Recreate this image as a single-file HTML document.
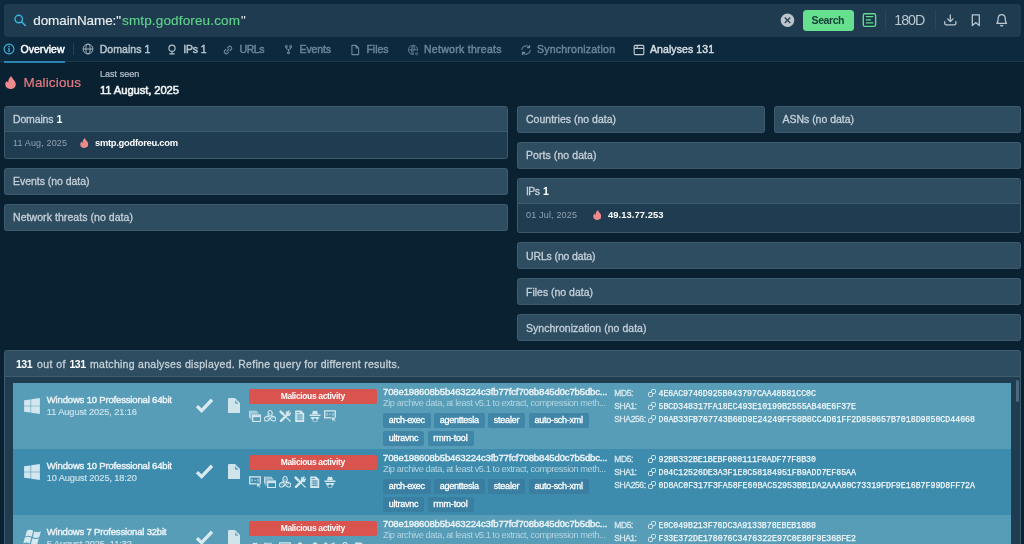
<!DOCTYPE html>
<html lang="en"><head><meta charset="utf-8"><title>Threat Intelligence Lookup</title>
<style>
html,body{margin:0;padding:0}
body{width:1024px;height:544px;overflow:hidden;background:#0a2132;position:relative;font-family:"Liberation Sans", sans-serif;}
#app{position:absolute;left:0;top:0;width:1024px;height:544px;overflow:hidden;will-change:transform}
#app div,#app svg,#app span{position:absolute;box-sizing:border-box}
.t{white-space:pre;font-family:"Liberation Sans", sans-serif}
.m{font-family:"Liberation Mono", monospace}
</style></head><body><div id="app">
<div style="left:0px;top:0px;width:1024px;height:62px;background:#0d293d;"></div>
<div style="left:0px;top:61px;width:1024px;height:1px;background:#1a384d;"></div>
<div style="left:4px;top:4px;width:1017px;height:33px;background:#1f3b50;border-radius:4px;"></div>
<div style="left:803.25px;top:9.6px;width:50.5px;height:21.3px;background:#66df8f;border-radius:3.5px;"></div>
<div style="left:885.2px;top:10.25px;width:1.0px;height:19.35px;background:#2b475b;"></div>
<div style="left:934.6px;top:10.25px;width:1.0px;height:19.35px;background:#2b475b;"></div>
<div style="left:4px;top:61px;width:61px;height:2px;background:#2a86ae;"></div>
<div style="left:73px;top:43px;width:1px;height:12px;background:#24445a;"></div>
<div style="left:4px;top:106px;width:504px;height:53px;background:#203c50;border-radius:2.5px;border:1px solid #3f5c6f;"></div>
<div style="left:5px;top:107px;width:502px;height:24.5px;background:#2f4d61;border-radius:2px 2px 0 0;"></div>
<div style="left:5px;top:131.2px;width:502px;height:1.0px;background:#3f5c6f;"></div>
<div style="left:4px;top:168px;width:504px;height:26.5px;background:#2f4d61;border-radius:2.5px;border:1px solid #3f5c6f;"></div>
<div style="left:4px;top:204.2px;width:504px;height:26.5px;background:#2f4d61;border-radius:2.5px;border:1px solid #3f5c6f;"></div>
<div style="left:517px;top:106px;width:247.5px;height:26.5px;background:#2f4d61;border-radius:2.5px;border:1px solid #3f5c6f;"></div>
<div style="left:773.5px;top:106px;width:247.5px;height:26.5px;background:#2f4d61;border-radius:2.5px;border:1px solid #3f5c6f;"></div>
<div style="left:517px;top:142px;width:504px;height:26.5px;background:#2f4d61;border-radius:2.5px;border:1px solid #3f5c6f;"></div>
<div style="left:517px;top:178px;width:504px;height:55px;background:#203c50;border-radius:2.5px;border:1px solid #3f5c6f;"></div>
<div style="left:518px;top:179px;width:502px;height:24.5px;background:#2f4d61;border-radius:2px 2px 0 0;"></div>
<div style="left:518px;top:203.2px;width:502px;height:1.0px;background:#3f5c6f;"></div>
<div style="left:517px;top:242.4px;width:504px;height:26.5px;background:#2f4d61;border-radius:2.5px;border:1px solid #3f5c6f;"></div>
<div style="left:517px;top:278.4px;width:504px;height:26.5px;background:#2f4d61;border-radius:2.5px;border:1px solid #3f5c6f;"></div>
<div style="left:517px;top:314.4px;width:504px;height:26.5px;background:#2f4d61;border-radius:2.5px;border:1px solid #3f5c6f;"></div>
<div style="left:4px;top:350px;width:1017px;height:210px;background:#1f3c51;border-radius:2.5px;border:1px solid #3f5c6f;"></div>
<div style="left:5px;top:351px;width:1015px;height:25.5px;background:#2f4d61;border-radius:2px 2px 0 0;"></div>
<div style="left:5px;top:376.3px;width:1015px;height:1.0px;background:#3f5c6f;"></div>
<div style="left:1015.7px;top:380px;width:3.3px;height:22px;background:#4d6b80;border-radius:1.6px;"></div>
<div style="left:13.25px;top:382.75px;width:997.75px;height:66.2px;background:#579db7;"></div>
<div style="left:249.25px;top:388.75px;width:127.75px;height:15.0px;background:#d9534f;border-radius:2px;"></div>
<div style="left:383px;top:412.75px;width:47.75px;height:14.9px;background:#3f86a9;border-radius:2px;"></div>
<div style="left:434px;top:412.75px;width:50.75px;height:14.9px;background:#3f86a9;border-radius:2px;"></div>
<div style="left:488px;top:412.75px;width:37.25px;height:14.9px;background:#3f86a9;border-radius:2px;"></div>
<div style="left:528.75px;top:412.75px;width:60.0px;height:14.9px;background:#3f86a9;border-radius:2px;"></div>
<div style="left:383px;top:430.95px;width:41.25px;height:14.9px;background:#3f86a9;border-radius:2px;"></div>
<div style="left:427.5px;top:430.95px;width:46.0px;height:14.9px;background:#3f86a9;border-radius:2px;"></div>
<div style="left:13.25px;top:448.65px;width:997.75px;height:66.2px;background:#3e8cad;"></div>
<div style="left:249.25px;top:454.65px;width:127.75px;height:15.0px;background:#d9534f;border-radius:2px;"></div>
<div style="left:383px;top:478.65px;width:47.75px;height:14.9px;background:#3a7ea1;border-radius:2px;"></div>
<div style="left:434px;top:478.65px;width:50.75px;height:14.9px;background:#3a7ea1;border-radius:2px;"></div>
<div style="left:488px;top:478.65px;width:37.25px;height:14.9px;background:#3a7ea1;border-radius:2px;"></div>
<div style="left:528.75px;top:478.65px;width:60.0px;height:14.9px;background:#3a7ea1;border-radius:2px;"></div>
<div style="left:383px;top:496.84999999999997px;width:41.25px;height:14.9px;background:#3a7ea1;border-radius:2px;"></div>
<div style="left:427.5px;top:496.84999999999997px;width:46.0px;height:14.9px;background:#3a7ea1;border-radius:2px;"></div>
<div style="left:13.25px;top:514.55px;width:997.75px;height:66.2px;background:#579db7;"></div>
<div style="left:249.25px;top:520.55px;width:127.75px;height:15.0px;background:#d9534f;border-radius:2px;"></div>
<div style="left:383px;top:544.55px;width:47.75px;height:14.9px;background:#3f86a9;border-radius:2px;"></div>
<div style="left:434px;top:544.55px;width:50.75px;height:14.9px;background:#3f86a9;border-radius:2px;"></div>
<div style="left:488px;top:544.55px;width:37.25px;height:14.9px;background:#3f86a9;border-radius:2px;"></div>
<div style="left:528.75px;top:544.55px;width:60.0px;height:14.9px;background:#3f86a9;border-radius:2px;"></div>
<div style="left:383px;top:562.75px;width:41.25px;height:14.9px;background:#3f86a9;border-radius:2px;"></div>
<div style="left:427.5px;top:562.75px;width:46.0px;height:14.9px;background:#3f86a9;border-radius:2px;"></div>
<svg style="left:12px;top:12px;" width="16" height="16" viewBox="0 0 16 16"><circle cx="6.75" cy="7.05" r="3.75" fill="none" stroke="#3db4e0" stroke-width="1.4"/><path d="M9.7 10 L13.3 13.5" stroke="#3db4e0" stroke-width="1.5" stroke-linecap="round"/></svg>
<svg style="left:780px;top:13px;" width="15" height="15" viewBox="0 0 15 15"><circle cx="7.5" cy="7.25" r="6.75" fill="#bcc5cc"/><path d="M4.75 4.5 L10.25 10 M10.25 4.5 L4.75 10" stroke="#1f3b50" stroke-width="1.15" stroke-linecap="butt"/></svg>
<svg style="left:861px;top:12px;" width="17" height="17" viewBox="0 0 17 17"><rect x="2.3" y="1.8" width="12.3" height="12.6" rx="1.6" fill="#1a3548" stroke="#62dc8e" stroke-width="1.4"/><path d="M5.3 4.6 H11.9 M5.3 7.8 H9.6 M5.3 10.9 H11.9" stroke="#62dc8e" stroke-width="1.3" stroke-linecap="round"/></svg>
<svg style="left:940px;top:10px;" width="72" height="20" viewBox="940 10 72 20"><g fill="none" stroke="#bcc8d1" stroke-width="1.25" stroke-linecap="round" stroke-linejoin="round"><path d="M950.3 14.9 V21.4 M947.6 18.9 L950.3 21.6 L953 18.9 M944.7 21.6 V23.6 Q944.7 24.8 945.9 24.8 H954.7 Q955.9 24.8 955.9 23.6 V21.6"/><path d="M972.3 14.8 H979.3 V25.5 L975.8 22.6 L972.3 25.5 Z"/><path d="M996.9 23.4 C998.2 22.2 998.1 20.6 998.1 19 C998.1 16 999.7 14.5 1001.7 14.5 C1003.7 14.5 1005.3 16 1005.3 19 C1005.3 20.6 1005.2 22.2 1006.5 23.4 Z M1000.7 25.5 Q1001.7 26.3 1002.7 25.5"/></g></svg>
<svg style="left:3px;top:43.3px;" width="12" height="12" viewBox="0 0 12 12"><circle cx="6" cy="6" r="4.9" fill="none" stroke="#3db4e0" stroke-width="1.1"/><path d="M6 5.4 V8.4" stroke="#3db4e0" stroke-width="1.3" stroke-linecap="round"/><circle cx="6" cy="3.6" r="0.8" fill="#3db4e0"/></svg>
<svg style="left:82.2px;top:43.4px;" width="12" height="12" viewBox="0 0 12 12"><g fill="none" stroke="#a9b8c2" stroke-width="0.95"><circle cx="6" cy="6" r="4.9"/><ellipse cx="6" cy="6" rx="2.1" ry="4.9"/><path d="M1.1 6 H10.9"/></g></svg>
<svg style="left:165.7px;top:42.7px;" width="12" height="12" viewBox="0 0 12 12"><g fill="none" stroke="#b6c4cd" stroke-width="1.1" stroke-linecap="round"><circle cx="6" cy="5.2" r="3.1"/><path d="M6 8.3 V10.8 M3.8 10.9 H8.2"/></g></svg>
<svg style="left:222px;top:43.5px;" width="12" height="12" viewBox="0 0 12 12"><g fill="none" stroke="#6f8797" stroke-width="1.1" stroke-linecap="round" transform="rotate(-45 6 6)"><path d="M5 7.9 H3.4 A1.9 1.9 0 0 1 3.4 4.1 H5"/><path d="M7 4.1 H8.6 A1.9 1.9 0 0 1 8.6 7.9 H7"/><path d="M4.4 6 H7.6"/></g></svg>
<svg style="left:282.6px;top:44px;" width="11" height="11" viewBox="0 0 12 12"><g fill="none" stroke="#6f8797" stroke-width="1.1" stroke-linecap="round"><circle cx="3.6" cy="2.8" r="1.1"/><circle cx="8.4" cy="2.8" r="1.1"/><circle cx="6" cy="9.6" r="1.1"/><path d="M3.6 3.9 V4.6 Q3.6 6 6 6 Q8.4 6 8.4 4.6 V3.9 M6 6 V8.5"/></g></svg>
<svg style="left:349px;top:43.5px;" width="12" height="12" viewBox="0 0 12 12"><path d="M2.9 1.4 H7 L9.6 4 V10.6 H2.9 Z M7 1.4 V4 H9.6" fill="none" stroke="#6f8797" stroke-width="1.1" stroke-linejoin="round"/></svg>
<svg style="left:407.3px;top:43.6px;" width="12" height="12" viewBox="0 0 12 12"><g fill="none" stroke="#67829a" stroke-width="0.85"><path d="M10.5 6.6 A4.6 4.6 0 1 0 6.6 10.4"/><path d="M6 1.3 C3.9 3.2 3.9 8.6 6 10.5 M6 1.3 C7.3 2.5 7.9 4.2 7.9 6 M1.4 5.9 H10.5 M6 1.3 V10.5"/><circle cx="9.7" cy="9.7" r="1.1"/></g></svg>
<svg style="left:520px;top:43.5px;" width="12" height="12" viewBox="0 0 12 12"><g fill="none" stroke="#6f8797" stroke-width="1.1" stroke-linecap="round" stroke-linejoin="round"><path d="M1.8 5.4 A4.3 4.3 0 0 1 9.4 3.4 M10.2 6.6 A4.3 4.3 0 0 1 2.6 8.6"/><path d="M9.6 1.4 V3.6 H7.4 M2.4 10.6 V8.4 H4.6"/></g></svg>
<svg style="left:632.5px;top:43.5px;" width="12" height="12" viewBox="0 0 12 12"><g fill="none" stroke="#c0cbd3" stroke-width="1.1" stroke-linejoin="round"><rect x="1.2" y="1.4" width="9.6" height="9.2" rx="1"/><path d="M1.2 4.4 H10.8 M4.2 1.4 V4.4"/></g></svg>
<svg style="left:5px;top:76px;" width="11" height="13" viewBox="0 0 11 13"><path d="M6.5 0 C6.5 2.5 10.8 4.5 10.8 8.2 C10.8 11 8.4 13 5.5 13 C2.6 13 0.3 11 0.3 8.3 C0.3 6.8 1 5.6 2 5 C2.2 5.8 2.6 6.3 3.3 6.4 C3 4 4.2 1.6 6.5 0 Z" fill="#ef8a8c"/></svg>
<svg style="left:79.8px;top:137.6px;" width="8.5" height="10" viewBox="0 0 11 13"><path d="M6.5 0 C6.5 2.5 10.8 4.5 10.8 8.2 C10.8 11 8.4 13 5.5 13 C2.6 13 0.3 11 0.3 8.3 C0.3 6.8 1 5.6 2 5 C2.2 5.8 2.6 6.3 3.3 6.4 C3 4 4.2 1.6 6.5 0 Z" fill="#ef8a8c"/></svg>
<svg style="left:592.8px;top:209.6px;" width="8.5" height="10" viewBox="0 0 11 13"><path d="M6.5 0 C6.5 2.5 10.8 4.5 10.8 8.2 C10.8 11 8.4 13 5.5 13 C2.6 13 0.3 11 0.3 8.3 C0.3 6.8 1 5.6 2 5 C2.2 5.8 2.6 6.3 3.3 6.4 C3 4 4.2 1.6 6.5 0 Z" fill="#ef8a8c"/></svg>
<svg style="left:23.5px;top:397.85px;" width="16" height="16" viewBox="0 0 16 16.2"><path d="M0 2.3 L6.6 1.4 V7.75 H0 Z M7.15 1.3 L16 0 V7.75 H7.15 Z M0 8.35 H6.6 V14.7 L0 13.8 Z M7.15 8.35 H16 V16.2 L7.15 14.9 Z" fill="#d3e6ee"/></svg>
<svg style="left:194px;top:394.75px;" width="22" height="20" viewBox="194 12 22 20"><path d="M197.0 23.05 L201.6 27.72 L212.0 16.75" fill="none" stroke="#d8e9f0" stroke-width="3.3" stroke-linejoin="miter" stroke-miterlimit="6"/></svg>
<svg style="left:228.1px;top:398.1px;" width="12.2" height="15.4" viewBox="0 0 12.2 15.4"><path d="M0 1.2 Q0 0 1.2 0 H7 L12.2 5.2 V14.2 Q12.2 15.4 11 15.4 H1.2 Q0 15.4 0 14.2 Z" fill="#d0e4ec"/><path d="M7 2.1 V5.7 H10.7 Z" fill="#579db7" opacity="0.75"/></svg>
<svg style="left:249px;top:409.75px;" width="12.4" height="12.4" viewBox="0 0 12.4 12.4"><g fill="none" stroke="#d6e8ef"><path d="M1.9 9.4 V2.9 H9.4 M0.5 7.6 V1.2 H8" stroke-width="1.1" opacity="0.85"/><rect x="3.7" y="5" width="8" height="6.6" stroke-width="1.25"/><path d="M3.7 6.2 H11.7" stroke-width="1.9"/></g></svg>
<svg style="left:264px;top:409.75px;" width="12.4" height="12.4" viewBox="0 0 12.4 12.4"><g fill="none" stroke="#d6e8ef" stroke-width="1.15" stroke-linecap="round"><path d="M4.9 5.6 C3.4 4.2 3.7 1.5 5.5 0.5 M7.3 5.6 C8.8 4.2 8.5 1.5 6.7 0.5"/><g transform="rotate(120 6.1 6.9)"><path d="M4.9 5.6 C3.4 4.2 3.7 1.5 5.5 0.5 M7.3 5.6 C8.8 4.2 8.5 1.5 6.7 0.5"/></g><g transform="rotate(240 6.1 6.9)"><path d="M4.9 5.6 C3.4 4.2 3.7 1.5 5.5 0.5 M7.3 5.6 C8.8 4.2 8.5 1.5 6.7 0.5"/></g><circle cx="6.1" cy="6.9" r="1.3" stroke-width="0.9"/><circle cx="6.1" cy="6.9" r="3.1" stroke-width="0.7" stroke-dasharray="3.2 3.3" stroke-dashoffset="1.6"/></g></svg>
<svg style="left:279px;top:409.75px;" width="12.4" height="12.4" viewBox="0 0 12.4 12.4"><g stroke="#d6e8ef" stroke-linecap="round" fill="none"><path d="M1.6 1.6 L4.4 4.4" stroke-width="2.5"/><path d="M4.4 4.4 L11.2 11.2" stroke-width="1.2"/><path d="M2 10.9 L8.2 4.7" stroke-width="2.4"/><path d="M8 1.6 A2.7 2.7 0 0 0 7.9 5 A2.7 2.7 0 0 0 11.3 4.9 L9.6 4.4 L8.7 3.4 L8 1.6 Z" fill="#d6e8ef" stroke-width="0.9" stroke-linejoin="round"/><path d="M10.2 0.9 L8.9 2.6 L10.2 3.9 L12 2.7" stroke-width="1.3" stroke-linejoin="round"/></g></svg>
<svg style="left:294px;top:409.75px;" width="12.4" height="12.4" viewBox="0 0 12.4 12.4"><g><path d="M1.2 0.5 H7.2 L10.2 3.5 V12 H1.2 Z" fill="#d6e8ef"/><path d="M2.6 2.6 H5.8 M2.6 5 H8.8 M2.6 7.1 H8.8 M2.6 9.3 H8.8" stroke="#579db7" stroke-width="0.9"/><path d="M4.7 4.2 V10.4 M6.9 4.2 V10.4" stroke="#579db7" stroke-width="0.6"/></g></svg>
<svg style="left:309px;top:409.75px;" width="12.4" height="12.4" viewBox="0 0 12.4 12.4"><g fill="#d6e8ef"><path d="M3 4.2 L3.9 1.1 Q4.1 0.4 4.8 0.7 L6 1.2 L7.2 0.7 Q7.9 0.4 8.1 1.1 L9 4.2 Z"/><rect x="0.3" y="4.6" width="11.4" height="1.4" rx="0.7"/><path d="M1.7 7.1 H10.3 V7.9 H9.8 Q9.6 9.7 8.2 9.7 Q7 9.7 6.6 8.3 H5.4 Q5 9.7 3.8 9.7 Q2.4 9.7 2.2 7.9 H1.7 Z"/><path d="M3.2 10.1 L6 11.4 L8.8 10.1 L8 11.7 H4 Z" opacity="0.9"/></g></svg>
<svg style="left:324px;top:409.75px;" width="12.4" height="12.4" viewBox="0 0 12.4 12.4"><g><rect x="0.7" y="0.9" width="10.6" height="6.9" fill="none" stroke="#d6e8ef" stroke-width="1.3"/><path d="M3 2.9 V5.8 M9 2.9 V5.8 M5.2 4.35 H6.8" stroke="#d6e8ef" stroke-width="0.9"/><path d="M7.2 6.6 L12.2 8.2 L10.5 9.3 L11.9 11.1 L10.8 11.9 L9.5 10.1 L8.2 11.4 Z" fill="#d6e8ef" stroke="#579db7" stroke-width="0.6"/></g></svg>
<svg style="left:647px;top:389px;" width="10" height="10" viewBox="0 0 10 10"><g fill="none" stroke="#dcebf2" stroke-width="1"><rect x="1.5" y="3.5" width="4" height="4" rx="0.9"/><path d="M4.5 3 V1.5 Q4.5 0.5 5.5 0.5 H7.5 Q8.5 0.5 8.5 1.5 V3.5 Q8.5 4.5 7.5 4.5 H6"/></g></svg>
<svg style="left:647px;top:402px;" width="10" height="10" viewBox="0 0 10 10"><g fill="none" stroke="#dcebf2" stroke-width="1"><rect x="1.5" y="3.5" width="4" height="4" rx="0.9"/><path d="M4.5 3 V1.5 Q4.5 0.5 5.5 0.5 H7.5 Q8.5 0.5 8.5 1.5 V3.5 Q8.5 4.5 7.5 4.5 H6"/></g></svg>
<svg style="left:647px;top:415px;" width="10" height="10" viewBox="0 0 10 10"><g fill="none" stroke="#dcebf2" stroke-width="1"><rect x="1.5" y="3.5" width="4" height="4" rx="0.9"/><path d="M4.5 3 V1.5 Q4.5 0.5 5.5 0.5 H7.5 Q8.5 0.5 8.5 1.5 V3.5 Q8.5 4.5 7.5 4.5 H6"/></g></svg>
<svg style="left:23.5px;top:463.75px;" width="16" height="16" viewBox="0 0 16 16.2"><path d="M0 2.3 L6.6 1.4 V7.75 H0 Z M7.15 1.3 L16 0 V7.75 H7.15 Z M0 8.35 H6.6 V14.7 L0 13.8 Z M7.15 8.35 H16 V16.2 L7.15 14.9 Z" fill="#d3e6ee"/></svg>
<svg style="left:194px;top:460.65px;" width="22" height="20" viewBox="194 12 22 20"><path d="M197.0 23.05 L201.6 27.72 L212.0 16.75" fill="none" stroke="#d8e9f0" stroke-width="3.3" stroke-linejoin="miter" stroke-miterlimit="6"/></svg>
<svg style="left:228.1px;top:464.0px;" width="12.2" height="15.4" viewBox="0 0 12.2 15.4"><path d="M0 1.2 Q0 0 1.2 0 H7 L12.2 5.2 V14.2 Q12.2 15.4 11 15.4 H1.2 Q0 15.4 0 14.2 Z" fill="#d0e4ec"/><path d="M7 2.1 V5.7 H10.7 Z" fill="#3e8cad" opacity="0.75"/></svg>
<svg style="left:249px;top:475.65px;" width="12.4" height="12.4" viewBox="0 0 12.4 12.4"><g><rect x="0.7" y="0.9" width="10.6" height="6.9" fill="none" stroke="#d6e8ef" stroke-width="1.3"/><path d="M3 2.9 V5.8 M9 2.9 V5.8 M5.2 4.35 H6.8" stroke="#d6e8ef" stroke-width="0.9"/><path d="M7.2 6.6 L12.2 8.2 L10.5 9.3 L11.9 11.1 L10.8 11.9 L9.5 10.1 L8.2 11.4 Z" fill="#d6e8ef" stroke="#3e8cad" stroke-width="0.6"/></g></svg>
<svg style="left:264px;top:475.65px;" width="12.4" height="12.4" viewBox="0 0 12.4 12.4"><g fill="none" stroke="#d6e8ef"><path d="M1.9 9.4 V2.9 H9.4 M0.5 7.6 V1.2 H8" stroke-width="1.1" opacity="0.85"/><rect x="3.7" y="5" width="8" height="6.6" stroke-width="1.25"/><path d="M3.7 6.2 H11.7" stroke-width="1.9"/></g></svg>
<svg style="left:279px;top:475.65px;" width="12.4" height="12.4" viewBox="0 0 12.4 12.4"><g fill="none" stroke="#d6e8ef" stroke-width="1.15" stroke-linecap="round"><path d="M4.9 5.6 C3.4 4.2 3.7 1.5 5.5 0.5 M7.3 5.6 C8.8 4.2 8.5 1.5 6.7 0.5"/><g transform="rotate(120 6.1 6.9)"><path d="M4.9 5.6 C3.4 4.2 3.7 1.5 5.5 0.5 M7.3 5.6 C8.8 4.2 8.5 1.5 6.7 0.5"/></g><g transform="rotate(240 6.1 6.9)"><path d="M4.9 5.6 C3.4 4.2 3.7 1.5 5.5 0.5 M7.3 5.6 C8.8 4.2 8.5 1.5 6.7 0.5"/></g><circle cx="6.1" cy="6.9" r="1.3" stroke-width="0.9"/><circle cx="6.1" cy="6.9" r="3.1" stroke-width="0.7" stroke-dasharray="3.2 3.3" stroke-dashoffset="1.6"/></g></svg>
<svg style="left:294px;top:475.65px;" width="12.4" height="12.4" viewBox="0 0 12.4 12.4"><g stroke="#d6e8ef" stroke-linecap="round" fill="none"><path d="M1.6 1.6 L4.4 4.4" stroke-width="2.5"/><path d="M4.4 4.4 L11.2 11.2" stroke-width="1.2"/><path d="M2 10.9 L8.2 4.7" stroke-width="2.4"/><path d="M8 1.6 A2.7 2.7 0 0 0 7.9 5 A2.7 2.7 0 0 0 11.3 4.9 L9.6 4.4 L8.7 3.4 L8 1.6 Z" fill="#d6e8ef" stroke-width="0.9" stroke-linejoin="round"/><path d="M10.2 0.9 L8.9 2.6 L10.2 3.9 L12 2.7" stroke-width="1.3" stroke-linejoin="round"/></g></svg>
<svg style="left:309px;top:475.65px;" width="12.4" height="12.4" viewBox="0 0 12.4 12.4"><g><path d="M1.2 0.5 H7.2 L10.2 3.5 V12 H1.2 Z" fill="#d6e8ef"/><path d="M2.6 2.6 H5.8 M2.6 5 H8.8 M2.6 7.1 H8.8 M2.6 9.3 H8.8" stroke="#3e8cad" stroke-width="0.9"/><path d="M4.7 4.2 V10.4 M6.9 4.2 V10.4" stroke="#3e8cad" stroke-width="0.6"/></g></svg>
<svg style="left:324px;top:475.65px;" width="12.4" height="12.4" viewBox="0 0 12.4 12.4"><g fill="#d6e8ef"><path d="M3 4.2 L3.9 1.1 Q4.1 0.4 4.8 0.7 L6 1.2 L7.2 0.7 Q7.9 0.4 8.1 1.1 L9 4.2 Z"/><rect x="0.3" y="4.6" width="11.4" height="1.4" rx="0.7"/><path d="M1.7 7.1 H10.3 V7.9 H9.8 Q9.6 9.7 8.2 9.7 Q7 9.7 6.6 8.3 H5.4 Q5 9.7 3.8 9.7 Q2.4 9.7 2.2 7.9 H1.7 Z"/><path d="M3.2 10.1 L6 11.4 L8.8 10.1 L8 11.7 H4 Z" opacity="0.9"/></g></svg>
<svg style="left:647px;top:455px;" width="10" height="10" viewBox="0 0 10 10"><g fill="none" stroke="#dcebf2" stroke-width="1"><rect x="1.5" y="3.5" width="4" height="4" rx="0.9"/><path d="M4.5 3 V1.5 Q4.5 0.5 5.5 0.5 H7.5 Q8.5 0.5 8.5 1.5 V3.5 Q8.5 4.5 7.5 4.5 H6"/></g></svg>
<svg style="left:647px;top:468px;" width="10" height="10" viewBox="0 0 10 10"><g fill="none" stroke="#dcebf2" stroke-width="1"><rect x="1.5" y="3.5" width="4" height="4" rx="0.9"/><path d="M4.5 3 V1.5 Q4.5 0.5 5.5 0.5 H7.5 Q8.5 0.5 8.5 1.5 V3.5 Q8.5 4.5 7.5 4.5 H6"/></g></svg>
<svg style="left:647px;top:481px;" width="10" height="10" viewBox="0 0 10 10"><g fill="none" stroke="#dcebf2" stroke-width="1"><rect x="1.5" y="3.5" width="4" height="4" rx="0.9"/><path d="M4.5 3 V1.5 Q4.5 0.5 5.5 0.5 H7.5 Q8.5 0.5 8.5 1.5 V3.5 Q8.5 4.5 7.5 4.5 H6"/></g></svg>
<svg style="left:22.6px;top:528.3499999999999px;" width="18.4" height="18" viewBox="-0.5 0 15.25 15"><g transform="scale(1.0515 1)"><path d="M2.6 2.2 C4.4 1.2 6 1.3 7.6 2.4 L6.3 7.2 C4.7 6.2 3 6.1 1.3 7 Z M8.5 2.9 C10.2 3.8 11.9 3.8 13.7 2.7 L12.4 7.5 C10.6 8.5 8.9 8.5 7.2 7.6 Z M1 8 C2.8 7 4.5 7.1 6.1 8.1 L4.8 12.9 C3.2 11.9 1.5 11.8 -0.3 12.8 Z M7 8.6 C8.7 9.5 10.4 9.5 12.1 8.5 L10.8 13.3 C9 14.3 7.3 14.3 5.7 13.4 Z" fill="#d6e8ef"/></g></svg>
<svg style="left:194px;top:526.55px;" width="22" height="20" viewBox="194 12 22 20"><path d="M197.0 23.05 L201.6 27.72 L212.0 16.75" fill="none" stroke="#d8e9f0" stroke-width="3.3" stroke-linejoin="miter" stroke-miterlimit="6"/></svg>
<svg style="left:228.1px;top:529.9px;" width="12.2" height="15.4" viewBox="0 0 12.2 15.4"><path d="M0 1.2 Q0 0 1.2 0 H7 L12.2 5.2 V14.2 Q12.2 15.4 11 15.4 H1.2 Q0 15.4 0 14.2 Z" fill="#d0e4ec"/><path d="M7 2.1 V5.7 H10.7 Z" fill="#579db7" opacity="0.75"/></svg>
<svg style="left:249px;top:541.55px;" width="12.4" height="12.4" viewBox="0 0 12.4 12.4"><g fill="#d6e8ef"><path d="M3 4.2 L3.9 1.1 Q4.1 0.4 4.8 0.7 L6 1.2 L7.2 0.7 Q7.9 0.4 8.1 1.1 L9 4.2 Z"/><rect x="0.3" y="4.6" width="11.4" height="1.4" rx="0.7"/><path d="M1.7 7.1 H10.3 V7.9 H9.8 Q9.6 9.7 8.2 9.7 Q7 9.7 6.6 8.3 H5.4 Q5 9.7 3.8 9.7 Q2.4 9.7 2.2 7.9 H1.7 Z"/><path d="M3.2 10.1 L6 11.4 L8.8 10.1 L8 11.7 H4 Z" opacity="0.9"/></g></svg>
<svg style="left:264px;top:541.55px;" width="12.4" height="12.4" viewBox="0 0 12.4 12.4"><g fill="none" stroke="#d6e8ef"><path d="M1.9 9.4 V2.9 H9.4 M0.5 7.6 V1.2 H8" stroke-width="1.1" opacity="0.85"/><rect x="3.7" y="5" width="8" height="6.6" stroke-width="1.25"/><path d="M3.7 6.2 H11.7" stroke-width="1.9"/></g></svg>
<svg style="left:279px;top:541.55px;" width="12.4" height="12.4" viewBox="0 0 12.4 12.4"><g><rect x="0.7" y="0.9" width="10.6" height="6.9" fill="none" stroke="#d6e8ef" stroke-width="1.3"/><path d="M3 2.9 V5.8 M9 2.9 V5.8 M5.2 4.35 H6.8" stroke="#d6e8ef" stroke-width="0.9"/><path d="M7.2 6.6 L12.2 8.2 L10.5 9.3 L11.9 11.1 L10.8 11.9 L9.5 10.1 L8.2 11.4 Z" fill="#d6e8ef" stroke="#579db7" stroke-width="0.6"/></g></svg>
<svg style="left:294px;top:541.55px;" width="12.4" height="12.4" viewBox="0 0 12.4 12.4"><g fill="#d6e8ef"><circle cx="6" cy="2.6" r="2.3"/><path d="M1.6 11.6 Q1.6 6.4 6 6.4 Q10.4 6.4 10.4 11.6 Z"/></g></svg>
<svg style="left:309px;top:541.55px;" width="12.4" height="12.4" viewBox="0 0 12.4 12.4"><g fill="#d6e8ef"><circle cx="6" cy="2.6" r="2.3"/><path d="M1.6 11.6 Q1.6 6.4 6 6.4 Q10.4 6.4 10.4 11.6 Z"/></g></svg>
<svg style="left:324px;top:541.55px;" width="12.4" height="12.4" viewBox="0 0 12.4 12.4"><g stroke="#d6e8ef" stroke-linecap="round" fill="none"><path d="M1.6 1.6 L4.4 4.4" stroke-width="2.5"/><path d="M4.4 4.4 L11.2 11.2" stroke-width="1.2"/><path d="M2 10.9 L8.2 4.7" stroke-width="2.4"/><path d="M8 1.6 A2.7 2.7 0 0 0 7.9 5 A2.7 2.7 0 0 0 11.3 4.9 L9.6 4.4 L8.7 3.4 L8 1.6 Z" fill="#d6e8ef" stroke-width="0.9" stroke-linejoin="round"/><path d="M10.2 0.9 L8.9 2.6 L10.2 3.9 L12 2.7" stroke-width="1.3" stroke-linejoin="round"/></g></svg>
<svg style="left:339px;top:541.55px;" width="12.4" height="12.4" viewBox="0 0 12.4 12.4"><g fill="none" stroke="#d6e8ef" stroke-width="1.15" stroke-linecap="round"><path d="M4.9 5.6 C3.4 4.2 3.7 1.5 5.5 0.5 M7.3 5.6 C8.8 4.2 8.5 1.5 6.7 0.5"/><g transform="rotate(120 6.1 6.9)"><path d="M4.9 5.6 C3.4 4.2 3.7 1.5 5.5 0.5 M7.3 5.6 C8.8 4.2 8.5 1.5 6.7 0.5"/></g><g transform="rotate(240 6.1 6.9)"><path d="M4.9 5.6 C3.4 4.2 3.7 1.5 5.5 0.5 M7.3 5.6 C8.8 4.2 8.5 1.5 6.7 0.5"/></g><circle cx="6.1" cy="6.9" r="1.3" stroke-width="0.9"/><circle cx="6.1" cy="6.9" r="3.1" stroke-width="0.7" stroke-dasharray="3.2 3.3" stroke-dashoffset="1.6"/></g></svg>
<svg style="left:354px;top:541.55px;" width="12.4" height="12.4" viewBox="0 0 12.4 12.4"><g><path d="M1.2 0.5 H7.2 L10.2 3.5 V12 H1.2 Z" fill="#d6e8ef"/><path d="M2.6 2.6 H5.8 M2.6 5 H8.8 M2.6 7.1 H8.8 M2.6 9.3 H8.8" stroke="#579db7" stroke-width="0.9"/><path d="M4.7 4.2 V10.4 M6.9 4.2 V10.4" stroke="#579db7" stroke-width="0.6"/></g></svg>
<svg style="left:647px;top:521px;" width="10" height="10" viewBox="0 0 10 10"><g fill="none" stroke="#dcebf2" stroke-width="1"><rect x="1.5" y="3.5" width="4" height="4" rx="0.9"/><path d="M4.5 3 V1.5 Q4.5 0.5 5.5 0.5 H7.5 Q8.5 0.5 8.5 1.5 V3.5 Q8.5 4.5 7.5 4.5 H6"/></g></svg>
<svg style="left:647px;top:534px;" width="10" height="10" viewBox="0 0 10 10"><g fill="none" stroke="#dcebf2" stroke-width="1"><rect x="1.5" y="3.5" width="4" height="4" rx="0.9"/><path d="M4.5 3 V1.5 Q4.5 0.5 5.5 0.5 H7.5 Q8.5 0.5 8.5 1.5 V3.5 Q8.5 4.5 7.5 4.5 H6"/></g></svg>
<svg style="left:647px;top:547px;" width="10" height="10" viewBox="0 0 10 10"><g fill="none" stroke="#dcebf2" stroke-width="1"><rect x="1.5" y="3.5" width="4" height="4" rx="0.9"/><path d="M4.5 3 V1.5 Q4.5 0.5 5.5 0.5 H7.5 Q8.5 0.5 8.5 1.5 V3.5 Q8.5 4.5 7.5 4.5 H6"/></g></svg>
<span class="t" style="left:33.3px;top:13px;font-size:13.5px;line-height:15px;color:#e9eef1;letter-spacing:-0.104px;-webkit-text-stroke:0.15px;">domainName:&quot;</span>
<span class="t" style="left:122px;top:13px;font-size:13.5px;line-height:15px;color:#5fd38a;letter-spacing:0.152px;-webkit-text-stroke:0.15px;">smtp.godforeu.com</span>
<span class="t" style="left:241px;top:13px;font-size:13.5px;line-height:15px;color:#e6ecf0;">&quot;</span>
<span class="t" style="left:811.6px;top:14px;font-size:10.5px;line-height:12px;font-weight:700;color:#164139;letter-spacing:-0.426px;">Search</span>
<span class="t" style="left:894.3px;top:12px;font-size:14.25px;line-height:16px;color:#b9c7d0;letter-spacing:-1.059px;">180D</span>
<span class="t" style="left:20.5px;top:43px;font-size:10.5px;line-height:12px;color:#ffffff;letter-spacing:0.033px;-webkit-text-stroke:0.45px;">Overview</span>
<span class="t" style="left:99.75px;top:43px;font-size:10.5px;line-height:12px;color:#b6c4cd;letter-spacing:0.037px;-webkit-text-stroke:0.45px;">Domains 1</span>
<span class="t" style="left:183.25px;top:43px;font-size:10.5px;line-height:12px;color:#b6c4cd;letter-spacing:-0.172px;-webkit-text-stroke:0.45px;">IPs 1</span>
<span class="t" style="left:239.5px;top:43px;font-size:10.5px;line-height:12px;color:#6b8596;letter-spacing:-0.422px;-webkit-text-stroke:0.45px;">URLs</span>
<span class="t" style="left:299.5px;top:43px;font-size:10.5px;line-height:12px;color:#6b8596;letter-spacing:-0.122px;-webkit-text-stroke:0.45px;">Events</span>
<span class="t" style="left:366.5px;top:43px;font-size:10.5px;line-height:12px;color:#6b8596;letter-spacing:-0.043px;-webkit-text-stroke:0.45px;">Files</span>
<span class="t" style="left:424px;top:43px;font-size:10.5px;line-height:12px;color:#6b8596;letter-spacing:0.283px;-webkit-text-stroke:0.45px;">Network threats</span>
<span class="t" style="left:537px;top:43px;font-size:10.5px;line-height:12px;color:#6b8596;letter-spacing:0.234px;-webkit-text-stroke:0.45px;">Synchronization</span>
<span class="t" style="left:650px;top:43px;font-size:10.5px;line-height:12px;color:#d5dde3;letter-spacing:0.087px;-webkit-text-stroke:0.45px;">Analyses 131</span>
<span class="t" style="left:23.5px;top:75px;font-size:13.5px;line-height:15px;color:#e67c81;letter-spacing:0.152px;-webkit-text-stroke:0.2px;">Malicious</span>
<span class="t" style="left:100px;top:69px;font-size:9px;line-height:10px;color:#b4c2cc;letter-spacing:0.034px;-webkit-text-stroke:0.2px;">Last seen</span>
<span class="t" style="left:100px;top:84px;font-size:11.25px;line-height:12px;color:#eef2f4;letter-spacing:-0.107px;-webkit-text-stroke:0.55px;">11 August, 2025</span>
<span class="t" style="left:13px;top:113px;font-size:10.5px;line-height:12px;color:#c5d1d9;letter-spacing:-0.156px;-webkit-text-stroke:0.3px;">Domains</span>
<span class="t" style="left:56.5px;top:113px;font-size:10.5px;line-height:12px;font-weight:700;color:#ffffff;">1</span>
<span class="t" style="left:13px;top:138px;font-size:9px;line-height:10px;color:#8fa3b1;letter-spacing:0.146px;">11 Aug, 2025</span>
<span class="t" style="left:95px;top:137px;font-size:9.4px;line-height:11px;font-weight:700;color:#ffffff;letter-spacing:-0.282px;">smtp.godforeu.com</span>
<span class="t" style="left:13px;top:175px;font-size:10.5px;line-height:12px;color:#c5d1d9;letter-spacing:-0.036px;-webkit-text-stroke:0.3px;">Events (no data)</span>
<span class="t" style="left:13px;top:211px;font-size:10.5px;line-height:12px;color:#c5d1d9;letter-spacing:0.064px;-webkit-text-stroke:0.3px;">Network threats (no data)</span>
<span class="t" style="left:526px;top:113px;font-size:10.5px;line-height:12px;color:#c5d1d9;letter-spacing:0.006px;-webkit-text-stroke:0.3px;">Countries (no data)</span>
<span class="t" style="left:782.5px;top:113px;font-size:10.5px;line-height:12px;color:#c5d1d9;letter-spacing:-0.023px;-webkit-text-stroke:0.3px;">ASNs (no data)</span>
<span class="t" style="left:526px;top:149px;font-size:10.5px;line-height:12px;color:#c5d1d9;letter-spacing:0.075px;-webkit-text-stroke:0.3px;">Ports (no data)</span>
<span class="t" style="left:526px;top:185px;font-size:10.5px;line-height:12px;color:#c5d1d9;letter-spacing:-0.586px;-webkit-text-stroke:0.3px;">IPs</span>
<span class="t" style="left:543px;top:185px;font-size:10.5px;line-height:12px;font-weight:700;color:#ffffff;">1</span>
<span class="t" style="left:526px;top:210px;font-size:9px;line-height:10px;color:#8fa3b1;letter-spacing:0.178px;">01 Jul, 2025</span>
<span class="t" style="left:608px;top:209px;font-size:9.4px;line-height:11px;font-weight:700;color:#ffffff;letter-spacing:0.068px;">49.13.77.253</span>
<span class="t" style="left:526px;top:250px;font-size:10.5px;line-height:12px;color:#c5d1d9;letter-spacing:-0.131px;-webkit-text-stroke:0.3px;">URLs (no data)</span>
<span class="t" style="left:526px;top:286px;font-size:10.5px;line-height:12px;color:#c5d1d9;letter-spacing:-0.009px;-webkit-text-stroke:0.3px;">Files (no data)</span>
<span class="t" style="left:526px;top:322px;font-size:10.5px;line-height:12px;color:#c5d1d9;letter-spacing:0.035px;-webkit-text-stroke:0.3px;">Synchronization (no data)</span>
<span class="t" style="left:16px;top:358px;font-size:10.5px;line-height:12px;font-weight:700;color:#ffffff;letter-spacing:-0.516px;">131</span>
<span class="t" style="left:37px;top:358px;font-size:10.5px;line-height:12px;color:#c5d1d9;letter-spacing:0.444px;-webkit-text-stroke:0.3px;">out of</span>
<span class="t" style="left:69.5px;top:358px;font-size:10.5px;line-height:12px;font-weight:700;color:#ffffff;letter-spacing:-0.516px;">131</span>
<span class="t" style="left:90px;top:358px;font-size:10.5px;line-height:12px;color:#c5d1d9;letter-spacing:0.282px;-webkit-text-stroke:0.3px;">matching analyses displayed. Refine query for different results.</span>
<span class="t" style="left:46.8px;top:394px;font-size:9.5px;line-height:11px;color:#eaf3f7;letter-spacing:-0.168px;-webkit-text-stroke:0.42px;">Windows 10 Professional 64bit</span>
<span class="t" style="left:46.8px;top:407px;font-size:9.25px;line-height:10px;color:#cde3ec;letter-spacing:-0.085px;-webkit-text-stroke:0.15px;">11 August 2025, 21:16</span>
<span class="t" style="left:280.75px;top:391px;font-size:8.5px;line-height:10px;font-weight:700;color:#ffffff;letter-spacing:-0.349px;">Malicious activity</span>
<span class="t" style="left:383px;top:386px;font-size:9.5px;line-height:11px;color:#eaf3f7;letter-spacing:-0.127px;-webkit-text-stroke:0.42px;">708e198608b5b463224c3fb77fcf708b845d0c7b5dbc...</span>
<span class="t" style="left:383px;top:398px;font-size:9.25px;line-height:10px;color:#b3d4e1;letter-spacing:-0.433px;">Zip archive data, at least v5.1 to extract, compression meth...</span>
<span class="t" style="left:388.8px;top:415px;font-size:9px;line-height:10px;color:#ffffff;letter-spacing:-0.421px;-webkit-text-stroke:0.3px;">arch-exec</span>
<span class="t" style="left:439.8px;top:415px;font-size:9px;line-height:10px;color:#ffffff;letter-spacing:-0.266px;-webkit-text-stroke:0.3px;">agenttesla</span>
<span class="t" style="left:493.8px;top:415px;font-size:9px;line-height:10px;color:#ffffff;letter-spacing:-0.228px;-webkit-text-stroke:0.3px;">stealer</span>
<span class="t" style="left:534.55px;top:415px;font-size:9px;line-height:10px;color:#ffffff;letter-spacing:-0.283px;-webkit-text-stroke:0.3px;">auto-sch-xml</span>
<span class="t" style="left:388.8px;top:433px;font-size:9px;line-height:10px;color:#ffffff;letter-spacing:-0.267px;-webkit-text-stroke:0.3px;">ultravnc</span>
<span class="t" style="left:433.3px;top:433px;font-size:9px;line-height:10px;color:#ffffff;letter-spacing:-0.157px;-webkit-text-stroke:0.3px;">rmm-tool</span>
<span class="t" style="left:614.3px;top:388px;font-size:8.5px;line-height:10px;color:#d4e8f0;letter-spacing:-0.404px;-webkit-text-stroke:0.3px;">MD5:</span>
<span class="t m" style="left:658.5px;top:389px;font-size:8.25px;line-height:9px;color:#f0f7fa;letter-spacing:-0.030px;-webkit-text-stroke:0.25px;">4E6AC9746D925B043797CAA48B81CC0C</span>
<span class="t" style="left:614.3px;top:401px;font-size:8.5px;line-height:10px;color:#d4e8f0;letter-spacing:-0.470px;-webkit-text-stroke:0.3px;">SHA1:</span>
<span class="t m" style="left:658.5px;top:402px;font-size:8.25px;line-height:9px;color:#f0f7fa;letter-spacing:-0.014px;-webkit-text-stroke:0.25px;">5BCD348317FA18EC493E10199B2555AB40E6F37E</span>
<span class="t" style="left:614.3px;top:414px;font-size:8.5px;line-height:10px;color:#d4e8f0;letter-spacing:-0.372px;-webkit-text-stroke:0.3px;">SHA256:</span>
<span class="t m" style="left:658.5px;top:415px;font-size:8.25px;line-height:9px;color:#f0f7fa;letter-spacing:-0.006px;-webkit-text-stroke:0.25px;">D0AB33FB767743B68D9E24249FF58B8CC4D61FF2D858657B7018D9850CD44668</span>
<span class="t" style="left:46.8px;top:460px;font-size:9.5px;line-height:11px;color:#eaf3f7;letter-spacing:-0.168px;-webkit-text-stroke:0.42px;">Windows 10 Professional 64bit</span>
<span class="t" style="left:46.8px;top:473px;font-size:9.25px;line-height:10px;color:#cde3ec;letter-spacing:-0.120px;-webkit-text-stroke:0.15px;">10 August 2025, 18:20</span>
<span class="t" style="left:280.75px;top:457px;font-size:8.5px;line-height:10px;font-weight:700;color:#ffffff;letter-spacing:-0.349px;">Malicious activity</span>
<span class="t" style="left:383px;top:452px;font-size:9.5px;line-height:11px;color:#eaf3f7;letter-spacing:-0.127px;-webkit-text-stroke:0.42px;">708e198608b5b463224c3fb77fcf708b845d0c7b5dbc...</span>
<span class="t" style="left:383px;top:464px;font-size:9.25px;line-height:10px;color:#b3d4e1;letter-spacing:-0.433px;">Zip archive data, at least v5.1 to extract, compression meth...</span>
<span class="t" style="left:388.8px;top:481px;font-size:9px;line-height:10px;color:#ffffff;letter-spacing:-0.421px;-webkit-text-stroke:0.3px;">arch-exec</span>
<span class="t" style="left:439.8px;top:481px;font-size:9px;line-height:10px;color:#ffffff;letter-spacing:-0.266px;-webkit-text-stroke:0.3px;">agenttesla</span>
<span class="t" style="left:493.8px;top:481px;font-size:9px;line-height:10px;color:#ffffff;letter-spacing:-0.228px;-webkit-text-stroke:0.3px;">stealer</span>
<span class="t" style="left:534.55px;top:481px;font-size:9px;line-height:10px;color:#ffffff;letter-spacing:-0.283px;-webkit-text-stroke:0.3px;">auto-sch-xml</span>
<span class="t" style="left:388.8px;top:499px;font-size:9px;line-height:10px;color:#ffffff;letter-spacing:-0.267px;-webkit-text-stroke:0.3px;">ultravnc</span>
<span class="t" style="left:433.3px;top:499px;font-size:9px;line-height:10px;color:#ffffff;letter-spacing:-0.157px;-webkit-text-stroke:0.3px;">rmm-tool</span>
<span class="t" style="left:614.3px;top:454px;font-size:8.5px;line-height:10px;color:#d4e8f0;letter-spacing:-0.404px;-webkit-text-stroke:0.3px;">MD5:</span>
<span class="t m" style="left:658.5px;top:455px;font-size:8.25px;line-height:9px;color:#f0f7fa;letter-spacing:-0.030px;-webkit-text-stroke:0.25px;">92BB332BE1BEBF080111F0ADF77F8B30</span>
<span class="t" style="left:614.3px;top:467px;font-size:8.5px;line-height:10px;color:#d4e8f0;letter-spacing:-0.470px;-webkit-text-stroke:0.3px;">SHA1:</span>
<span class="t m" style="left:658.5px;top:468px;font-size:8.25px;line-height:9px;color:#f0f7fa;letter-spacing:-0.014px;-webkit-text-stroke:0.25px;">D04C12526DE3A3F1E8C58184951FB9ADD7EF85AA</span>
<span class="t" style="left:614.3px;top:480px;font-size:8.5px;line-height:10px;color:#d4e8f0;letter-spacing:-0.372px;-webkit-text-stroke:0.3px;">SHA256:</span>
<span class="t m" style="left:658.5px;top:481px;font-size:8.25px;line-height:9px;color:#f0f7fa;letter-spacing:-0.006px;-webkit-text-stroke:0.25px;">0D8AC0F317F3FA58FE60BAC52953BB1DA2AAA80C73319FDF9E16B7F99D8FF72A</span>
<span class="t" style="left:46.8px;top:526px;font-size:9.5px;line-height:11px;color:#eaf3f7;letter-spacing:-0.182px;-webkit-text-stroke:0.42px;">Windows 7 Professional 32bit</span>
<span class="t" style="left:46.8px;top:539px;font-size:9.25px;line-height:10px;color:#cde3ec;letter-spacing:-0.082px;-webkit-text-stroke:0.15px;">5 August 2025, 11:32</span>
<span class="t" style="left:280.75px;top:523px;font-size:8.5px;line-height:10px;font-weight:700;color:#ffffff;letter-spacing:-0.349px;">Malicious activity</span>
<span class="t" style="left:383px;top:518px;font-size:9.5px;line-height:11px;color:#eaf3f7;letter-spacing:-0.127px;-webkit-text-stroke:0.42px;">708e198608b5b463224c3fb77fcf708b845d0c7b5dbc...</span>
<span class="t" style="left:383px;top:530px;font-size:9.25px;line-height:10px;color:#b3d4e1;letter-spacing:-0.433px;">Zip archive data, at least v5.1 to extract, compression meth...</span>
<span class="t" style="left:388.8px;top:547px;font-size:9px;line-height:10px;color:#ffffff;letter-spacing:-0.421px;-webkit-text-stroke:0.3px;">arch-exec</span>
<span class="t" style="left:439.8px;top:547px;font-size:9px;line-height:10px;color:#ffffff;letter-spacing:-0.266px;-webkit-text-stroke:0.3px;">agenttesla</span>
<span class="t" style="left:493.8px;top:547px;font-size:9px;line-height:10px;color:#ffffff;letter-spacing:-0.228px;-webkit-text-stroke:0.3px;">stealer</span>
<span class="t" style="left:534.55px;top:547px;font-size:9px;line-height:10px;color:#ffffff;letter-spacing:-0.283px;-webkit-text-stroke:0.3px;">auto-sch-xml</span>
<span class="t" style="left:388.8px;top:565px;font-size:9px;line-height:10px;color:#ffffff;letter-spacing:-0.267px;-webkit-text-stroke:0.3px;">ultravnc</span>
<span class="t" style="left:433.3px;top:565px;font-size:9px;line-height:10px;color:#ffffff;letter-spacing:-0.157px;-webkit-text-stroke:0.3px;">rmm-tool</span>
<span class="t" style="left:614.3px;top:520px;font-size:8.5px;line-height:10px;color:#d4e8f0;letter-spacing:-0.404px;-webkit-text-stroke:0.3px;">MD5:</span>
<span class="t m" style="left:658.5px;top:521px;font-size:8.25px;line-height:9px;color:#f0f7fa;letter-spacing:-0.030px;-webkit-text-stroke:0.25px;">E0C049B213F76DC3A9133B78EBEB18B8</span>
<span class="t" style="left:614.3px;top:533px;font-size:8.5px;line-height:10px;color:#d4e8f0;letter-spacing:-0.470px;-webkit-text-stroke:0.3px;">SHA1:</span>
<span class="t m" style="left:658.5px;top:534px;font-size:8.25px;line-height:9px;color:#f0f7fa;letter-spacing:-0.014px;-webkit-text-stroke:0.25px;">F33E372DE178076C3476322E97C0E80F9E36BFE2</span>
<span class="t" style="left:614.3px;top:546px;font-size:8.5px;line-height:10px;color:#d4e8f0;letter-spacing:-0.372px;-webkit-text-stroke:0.3px;">SHA256:</span>
<span class="t m" style="left:658.5px;top:547px;font-size:8.25px;line-height:9px;color:#f0f7fa;letter-spacing:-0.006px;-webkit-text-stroke:0.25px;">A3F1C07D9E2B58446FD0C1B7E98A2354D6F07B1C8E9A4D32C5B6E7F8091A2B3C</span>
</div></body></html>
